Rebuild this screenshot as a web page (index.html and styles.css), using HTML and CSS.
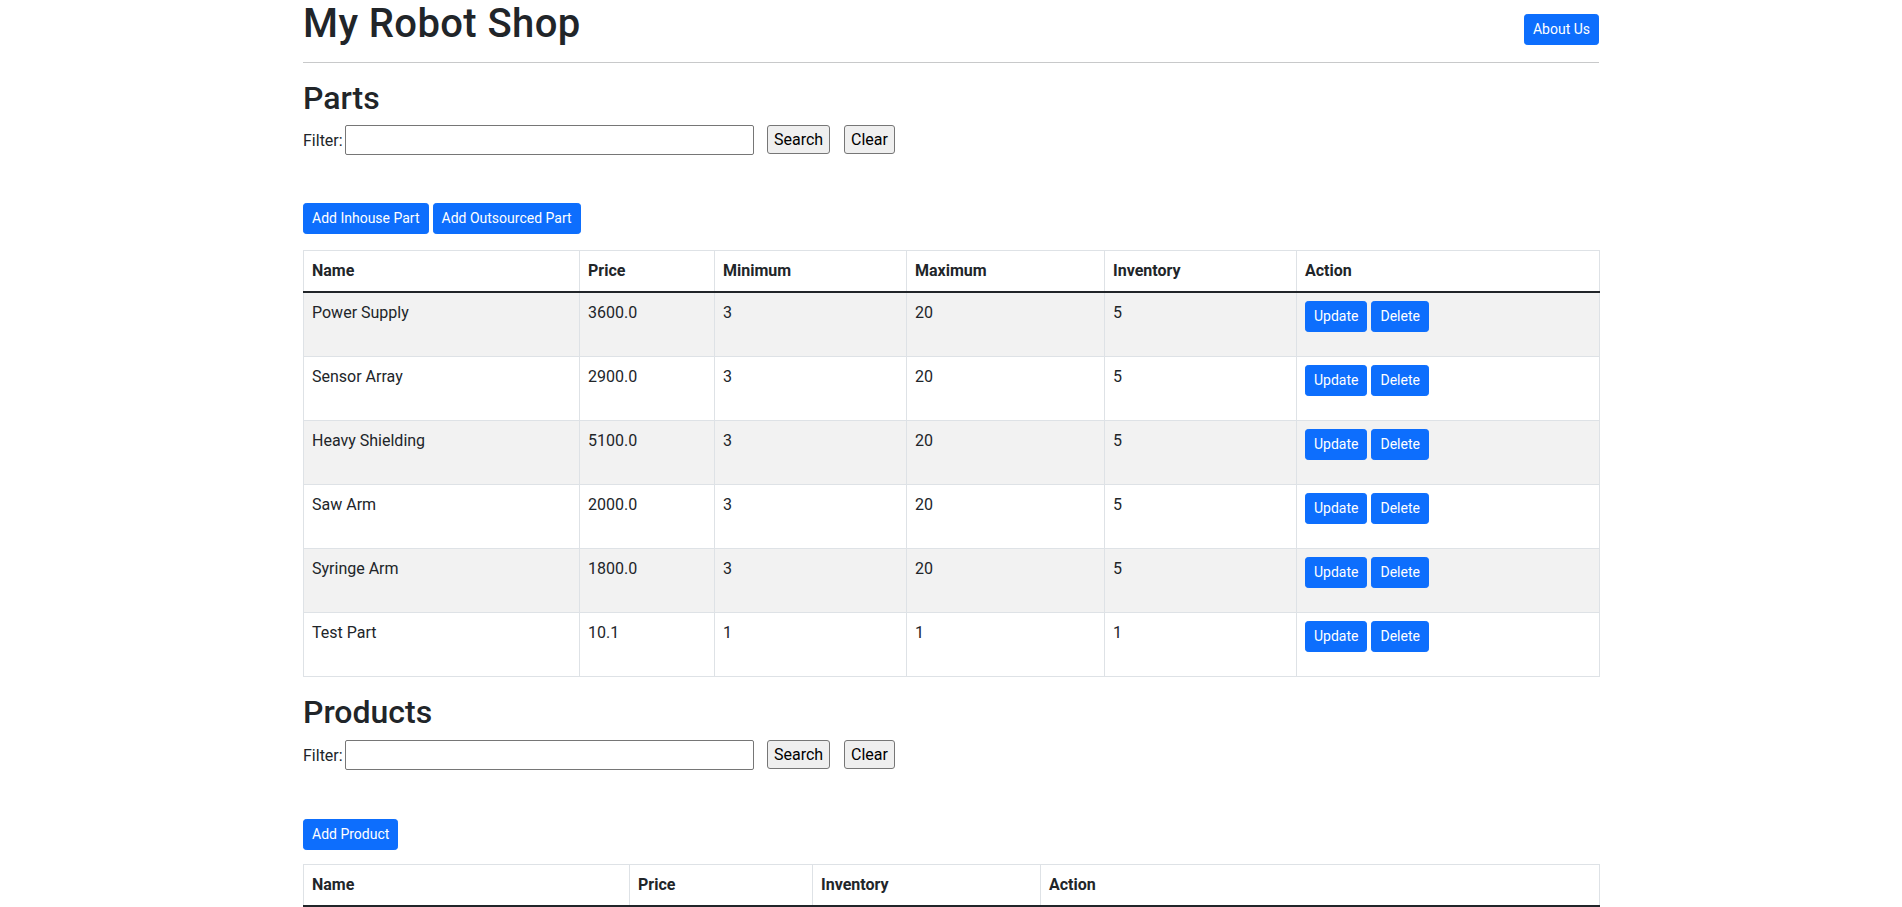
FILE: index.html
```html
<!DOCTYPE html>
<html lang="en">
<head>
<meta charset="utf-8">
<title>My Robot Shop</title>
<link rel="stylesheet" href="styles.css">
</head>
<body>
<div class="container">
  <header class="page-header">
    <h1 class="title">My Robot Shop</h1>
    <a class="btn btn-primary btn-sm about" href="#">About Us</a>
  </header>
  <hr class="divider">

  <section class="section">
    <h2 class="section-title">Parts</h2>
    <form class="filter">
      <label class="filter-label">Filter:</label>
      <input class="filter-input" type="text">
      <button class="plain-btn search" type="button">Search</button>
      <button class="plain-btn clear" type="button">Clear</button>
    </form>
    <div class="add-row">
      <a class="btn btn-primary btn-sm" href="#">Add Inhouse Part</a>
      <a class="btn btn-primary btn-sm" href="#">Add Outsourced Part</a>
    </div>
    <table class="data-table">
      <colgroup>
        <col class="p-name"><col class="p-price"><col class="p-min"><col class="p-max"><col class="p-inv"><col class="p-act">
      </colgroup>
      <thead>
        <tr><th>Name</th><th>Price</th><th>Minimum</th><th>Maximum</th><th>Inventory</th><th>Action</th></tr>
      </thead>
      <tbody>
        <tr><td>Power Supply</td><td>3600.0</td><td>3</td><td>20</td><td>5</td><td><div class="actions"><a class="btn btn-primary btn-sm" href="#">Update</a><a class="btn btn-primary btn-sm" href="#">Delete</a></div></td></tr>
        <tr><td>Sensor Array</td><td>2900.0</td><td>3</td><td>20</td><td>5</td><td><div class="actions"><a class="btn btn-primary btn-sm" href="#">Update</a><a class="btn btn-primary btn-sm" href="#">Delete</a></div></td></tr>
        <tr><td>Heavy Shielding</td><td>5100.0</td><td>3</td><td>20</td><td>5</td><td><div class="actions"><a class="btn btn-primary btn-sm" href="#">Update</a><a class="btn btn-primary btn-sm" href="#">Delete</a></div></td></tr>
        <tr><td>Saw Arm</td><td>2000.0</td><td>3</td><td>20</td><td>5</td><td><div class="actions"><a class="btn btn-primary btn-sm" href="#">Update</a><a class="btn btn-primary btn-sm" href="#">Delete</a></div></td></tr>
        <tr><td>Syringe Arm</td><td>1800.0</td><td>3</td><td>20</td><td>5</td><td><div class="actions"><a class="btn btn-primary btn-sm" href="#">Update</a><a class="btn btn-primary btn-sm" href="#">Delete</a></div></td></tr>
        <tr><td>Test Part</td><td>10.1</td><td>1</td><td>1</td><td>1</td><td><div class="actions"><a class="btn btn-primary btn-sm" href="#">Update</a><a class="btn btn-primary btn-sm" href="#">Delete</a></div></td></tr>
      </tbody>
    </table>
  </section>

  <section class="section">
    <h2 class="section-title">Products</h2>
    <form class="filter">
      <label class="filter-label">Filter:</label>
      <input class="filter-input" type="text">
      <button class="plain-btn search" type="button">Search</button>
      <button class="plain-btn clear" type="button">Clear</button>
    </form>
    <div class="add-row add-row-products">
      <a class="btn btn-primary btn-sm" href="#">Add Product</a>
    </div>
    <table class="data-table products-table">
      <colgroup>
        <col class="r-name"><col class="r-price"><col class="r-inv"><col class="r-act">
      </colgroup>
      <thead>
        <tr><th>Name</th><th>Price</th><th>Inventory</th><th>Action</th></tr>
      </thead>
      <tbody></tbody>
    </table>
  </section>
</div>
</body>
</html>
```
FILE: styles.css
```css
* { box-sizing: border-box; }

body {
  margin: 0;
  font-family: Roboto, "Liberation Sans", sans-serif;
  font-size: 16px;
  line-height: 1.5;
  color: #212529;
  background: #fff;
}

.container {
  width: 1320px;
  margin: 0 auto;
  padding: 0 12px;
}

.page-header {
  display: flex;
  justify-content: space-between;
  align-items: flex-start;
}

.title {
  margin: 0;
  font-size: 40px;
  line-height: 48px;
  font-weight: 500;
  letter-spacing: 0.4px;
}

.about { margin-top: 14px; }

.divider {
  margin: 14px 0 16px;
  border: 0;
  border-top: 1px solid #c8c9ca;
  height: 0;
}

.section-title {
  margin: 0 0 8px;
  font-size: 32px;
  line-height: 38.4px;
  font-weight: 500;
}

.filter {
  display: flex;
  align-items: flex-start;
  height: 30px;
  margin: 0;
}

.filter-label {
  width: 42px;
  line-height: 31px;
  font-size: 16px;
}

.filter-input {
  width: 409px;
  height: 30px;
  border: 1px solid #767676;
  border-radius: 2px;
  padding: 1px 2px;
  font: inherit;
  background: #fff;
}

.plain-btn {
  height: 29px;
  padding: 0 6px;
  border: 1px solid #767676;
  border-radius: 3px;
  background: #efefef;
  color: #000;
  font-family: Roboto, "Liberation Sans", sans-serif;
  font-size: 16px;
  line-height: 28px;
}

.search { margin-left: 13px; width: 63px; }
.clear { margin-left: 14px; width: 51px; }

.add-row {
  display: flex;
  gap: 4px;
  margin-top: 48px;
  margin-bottom: 16px;
}

.add-row-products { margin-top: 49px; margin-bottom: 14px; }

.btn {
  display: inline-block;
  text-decoration: none;
  text-align: center;
  border: 1px solid transparent;
  white-space: nowrap;
}

.btn-primary {
  background: #0d6efd;
  border-color: #0d6efd;
  color: #fff;
}

.btn-sm {
  padding: 4px 8px;
  font-size: 14px;
  line-height: 21px;
  border-radius: 3.2px;
}

.data-table {
  width: 100%;
  table-layout: fixed;
  border-collapse: collapse;
  margin-bottom: 16px;
  border: 1px solid #dee2e6;
}

.data-table th,
.data-table td {
  border: 1px solid #dee2e6;
  padding: 8px;
  text-align: left;
  vertical-align: top;
}

.data-table th {
  font-weight: 700;
  border-bottom: 2px solid #212529;
}

.data-table tbody tr:nth-child(odd) td { background: #f2f2f2; }

.actions {
  display: flex;
  gap: 4px;
  margin-bottom: 16px;
}

.p-name { width: 276px; }
.p-price { width: 135px; }
.p-min { width: 192px; }
.p-max { width: 198px; }
.p-inv { width: 192px; }
.p-act { width: 303px; }

.r-name { width: 326px; }
.r-price { width: 183px; }
.r-inv { width: 228px; }
.r-act { width: 559px; }
```
